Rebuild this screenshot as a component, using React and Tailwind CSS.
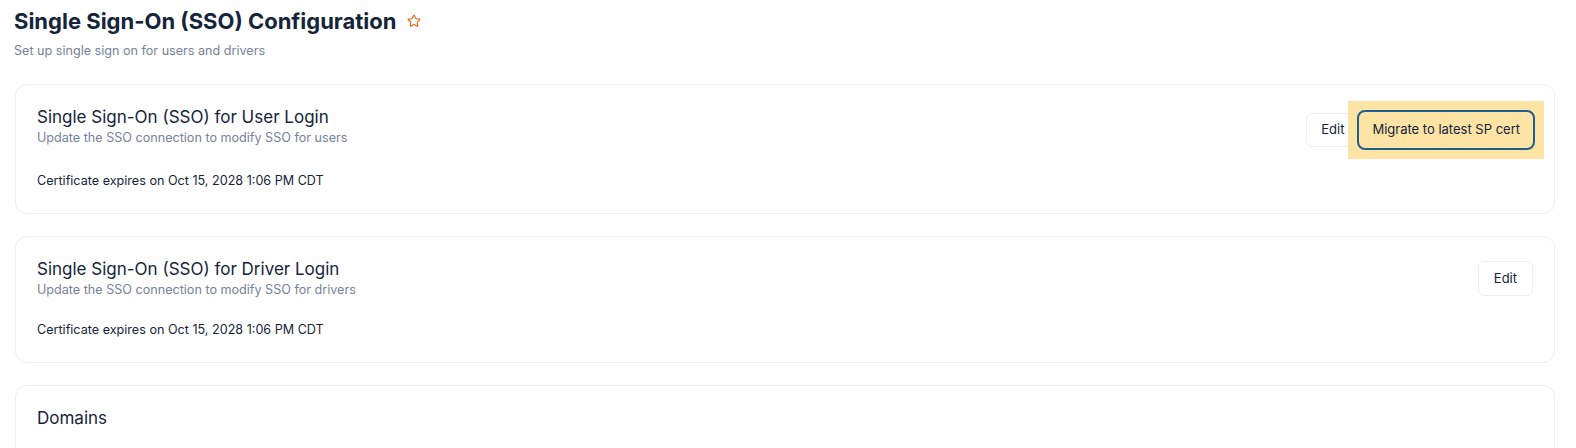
import { Star } from "lucide-react";

const Card = ({ title, subtitle, cert, children }) => (
  <div className="rounded-xl border border-[#eceef1] bg-white px-[21px] pt-[20px] pb-[23px]">
    <div className="flex items-start justify-between">
      <div>
        <div className="text-[17px] leading-[24px] text-[#14243b]">{title}</div>
        {subtitle && (
          <div className="text-[12.6px] leading-[18px] text-[#76829a]">{subtitle}</div>
        )}
      </div>
      {children}
    </div>
    {cert && (
      <div className="mt-[22px] text-[12.6px] leading-[18px] text-[#14243b]">{cert}</div>
    )}
  </div>
);

const App = () => {
  return (
    <div className="min-h-screen bg-white font-['Inter',sans-serif] pl-[15px] pr-[21px] pt-[6px]">
      <div className="flex items-center gap-[10px]">
        <h1 className="text-[22px] leading-[30px] font-bold text-[#14243b] -ml-px">
          Single Sign-On (SSO) Configuration
        </h1>
        <Star className="w-[14px] h-[14px] text-[#ea6a1f]" strokeWidth={2} />
      </div>
      <div className="mt-[6px] text-[12.6px] leading-[18px] text-[#76829a] -ml-px">
        Set up single sign on for users and drivers
      </div>

      <div className="mt-[24px] flex flex-col gap-[22px]">
        <Card
          title="Single Sign-On (SSO) for User Login"
          subtitle="Update the SSO connection to modify SSO for users"
          cert="Certificate expires on Oct 15, 2028 1:06 PM CDT"
        >
          <div className="flex items-center mt-[5px] -mr-[11px]">
            <button className="h-[34px] px-[14px] rounded-md border border-[#eceef1] bg-white text-[13px] text-[#14243b]">
              Edit
            </button>
            <div className="bg-[#fde3a4] -ml-[11px] p-[9px] -my-[9px]">
              <button className="h-[40px] px-[13px] rounded-lg border-2 border-[#1f5f8f] bg-[#fde3a4] text-[13px] text-[#14243b]">
                Migrate to latest SP cert
              </button>
            </div>
          </div>
        </Card>

        <Card
          title="Single Sign-On (SSO) for Driver Login"
          subtitle="Update the SSO connection to modify SSO for drivers"
          cert="Certificate expires on Oct 15, 2028 1:06 PM CDT"
        >
          <button className="mt-[4px] h-[35px] px-[15px] rounded-md border border-[#eceef1] bg-white text-[13px] text-[#14243b]">
            Edit
          </button>
        </Card>

        <div className="rounded-xl border border-[#eceef1] bg-white px-[21px] pt-[20px] h-[120px]">
          <div className="text-[17px] leading-[24px] text-[#14243b]">Domains</div>
        </div>
      </div>
    </div>
  );
};

export default App;
